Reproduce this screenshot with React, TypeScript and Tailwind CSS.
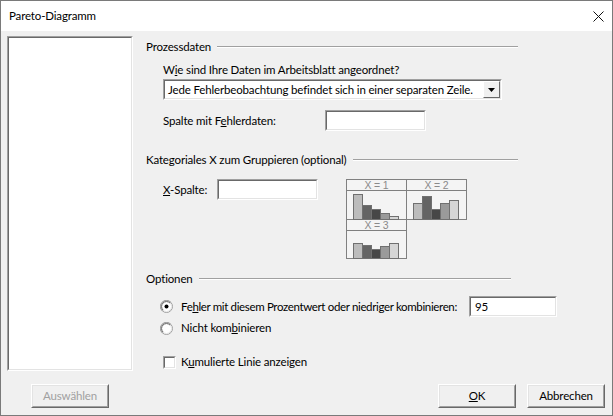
import React from "react";

const font = { fontFamily: 'Lato, "Liberation Sans", sans-serif' };

function Sunken({ className, children }: { className?: string; children?: React.ReactNode }) {
  return (
    <div className={"border border-t-[#a0a0a0] border-l-[#a0a0a0] border-b-white border-r-white " + (className ?? "")}>
      <div className="h-full w-full border border-t-[#696969] border-l-[#696969] border-b-[#e3e3e3] border-r-[#e3e3e3] bg-white flex items-center">
        {children}
      </div>
    </div>
  );
}

function Button({ children, disabled, className }: { children: React.ReactNode; disabled?: boolean; className?: string }) {
  return (
    <div className={"h-[24px] w-[78px] border border-t-white border-l-white border-b-[#696969] border-r-[#696969] " + (className ?? "")}>
      <div className={"h-full w-full border border-t-[#e3e3e3] border-l-[#e3e3e3] border-b-[#a0a0a0] border-r-[#a0a0a0] flex items-center justify-center " + (disabled ? "text-[#a0a0a0]" : "text-black")}>
        {children}
      </div>
    </div>
  );
}

function GroupHeader({ label, lineEnd }: { label: string; lineEnd: number }) {
  return (
    <div className="flex items-center h-[16px]" style={{ width: lineEnd }}>
      <span className="whitespace-nowrap">{label}</span>
      <div className="flex-1 h-px bg-[#a0a0a0] border-b border-white ml-[6px] box-content" />
    </div>
  );
}

function Radio({ checked }: { checked?: boolean }) {
  return (
    <svg width="13" height="13" viewBox="0 0 13 13" className="shrink-0">
      <circle cx="6.5" cy="6.5" r="6" fill="#fff" stroke="#a0a0a0" />
      <circle cx="6.5" cy="6.5" r="5" fill="none" stroke="#e3e3e3" />
      <path d="M2.2 10.8 A6 6 0 0 1 10.8 2.2" fill="none" stroke="#a0a0a0" />
      <path d="M3 10 A4.9 4.9 0 0 1 10 3" fill="none" stroke="#696969" />
      {checked && <circle cx="6.5" cy="6.5" r="2" fill="#000" />}
    </svg>
  );
}

function Chart() {
  const bar = (x: number, top: number, bottom: number, fill: string, key: string) => (
    <rect key={key} x={x} y={top} width={9} height={bottom - top} fill={fill} stroke="#707070" strokeWidth={1} />
  );
  const fills = ["#bcbcbc", "#646464", "#474747", "#9a9a9a", "#d6d6d6"];
  const c1 = [194.5, 205.5, 209.5, 213.5, 216.5];
  const c2 = [203.5, 196.5, 209.5, 203.5, 200.5];
  const c3 = [243.5, 245.5, 249.5, 246.5, 243.5];
  const ox = 346, oy = 179;
  const tf = { fontFamily: '"Liberation Sans", sans-serif' };
  return (
    <svg width="122" height="81" viewBox="0 0 122 81" className="shrink-0">
      <g transform={`translate(${-ox} ${-oy})`}>
        <rect x={346.5} y={179.5} width={120} height={40} fill="#f4f4f4" stroke="#808080" />
        <rect x={346.5} y={219.5} width={60} height={39} fill="#f4f4f4" stroke="#808080" />
        <line x1={406.5} y1={179.5} x2={406.5} y2={219.5} stroke="#808080" />
        <line x1={346.5} y1={190.5} x2={466.5} y2={190.5} stroke="#808080" />
        <line x1={346.5} y1={230.5} x2={406.5} y2={230.5} stroke="#808080" />
        <text x={376.5} y={188.8} fontSize="10.5" textAnchor="middle" fill="#8a8a8a" style={tf} xmlSpace="preserve">X = 1</text>
        <text x={436.5} y={188.8} fontSize="10.5" textAnchor="middle" fill="#8a8a8a" style={tf} xmlSpace="preserve">X = 2</text>
        <text x={376.5} y={228.8} fontSize="10.5" textAnchor="middle" fill="#8a8a8a" style={tf} xmlSpace="preserve">X = 3</text>
        {c1.map((t, i) => bar(353.5 + i * 9, t, 219.5, fills[i], "a" + i))}
        {c2.map((t, i) => bar(413.5 + i * 9, t, 219.5, fills[i], "b" + i))}
        {c3.map((t, i) => bar(353.5 + i * 9, t, 258.5, fills[i], "c" + i))}
      </g>
    </svg>
  );
}

export default function App() {
  return (
    <div className="w-[613px] h-[416px] flex flex-col border border-[#7a7a7a] bg-[#f0f0f0] text-black overflow-hidden text-[11.5px] tracking-[-0.15px]" style={font}>
      {/* Title bar */}
      <div className="h-[30px] bg-white flex items-center justify-between pl-[8px] pr-[8px] shrink-0">
        <span className="text-[11.5px]">Pareto-Diagramm</span>
        <svg width="11" height="11" viewBox="0 0 11 11">
          <path d="M0.5 0.5 L10.5 10.5 M10.5 0.5 L0.5 10.5" stroke="#111" strokeWidth="1" />
        </svg>
      </div>
      <div className="flex flex-1 pt-[5px]">
        {/* Left listbox */}
        <div className="pl-[6px]">
          <Sunken className="w-[126px] h-[335px]" />
        </div>
        {/* Right panel */}
        <div className="flex flex-col pl-[13px] pt-[3px]">
          <GroupHeader label="Prozessdaten" lineEnd={372} />
          <div className="pl-[17px] pt-[7px] flex flex-col">
            <span className="leading-[16px]">W<span className="underline">i</span>e sind Ihre Daten im Arbeitsblatt angeordnet?</span>
            <div className="mt-[1px] flex">
              <Sunken className="w-[339px] h-[21px]">
                <span className="pl-[3px] flex-1 whitespace-nowrap">Jede Fehlerbeobachtung befindet sich in einer separaten Zeile.</span>
                <div className="w-[17px] h-[17px] border border-t-white border-l-white border-b-[#696969] border-r-[#696969] bg-[#f0f0f0] flex items-center justify-center">
                  <svg width="7" height="4" viewBox="0 0 7 4"><path d="M0 0 H7 L3.5 4 Z" fill="#000" /></svg>
                </div>
              </Sunken>
            </div>
            <div className="flex items-center mt-[10px]">
              <span className="w-[162px]">Spalte mit F<span className="underline">e</span>hlerdaten:</span>
              <Sunken className="w-[101px] h-[21px]" />
            </div>
          </div>
          <div className="mt-[21px]">
            <GroupHeader label="Kategoriales X zum Gruppieren (optional)" lineEnd={372} />
          </div>
          <div className="pl-[17px] pt-[11px] flex">
            <div className="flex items-center h-[21px]">
              <span className="w-[54px]"><span className="underline">X</span>-Spalte:</span>
              <Sunken className="w-[101px] h-[21px]" />
            </div>
            <div className="ml-[28px] pt-0">
              <Chart />
            </div>
          </div>
          <div className="mt-[11px]">
            <GroupHeader label="Optionen" lineEnd={365} />
          </div>
          <div className="pl-[14px] pt-[9px] flex flex-col">
            <div className="flex items-center h-[21px]">
              <Radio checked />
              <span className="ml-[8px] w-[288px] whitespace-nowrap tracking-[-0.35px]">Fe<span className="underline">h</span>ler mit diesem Prozentwert oder niedriger kombinieren:</span>
              <Sunken className="w-[88px] h-[21px]">
                <span className="pl-[4px]">95</span>
              </Sunken>
            </div>
            <div className="flex items-center h-[16px] mt-[3px]">
              <Radio />
              <span className="ml-[8px]">Nicht kom<span className="underline">b</span>inieren</span>
            </div>
            <div className="flex items-center h-[16px] mt-[18px] ml-[3px]">
              <div className="w-[13px] h-[13px] border border-t-[#a0a0a0] border-l-[#a0a0a0] border-b-white border-r-white">
                <div className="w-full h-full border border-t-[#696969] border-l-[#696969] border-b-[#e3e3e3] border-r-[#e3e3e3] bg-white" />
              </div>
              <span className="ml-[5px]">K<span className="underline">u</span>mulierte Linie anzeigen</span>
            </div>
          </div>
        </div>
      </div>
      {/* Bottom buttons */}
      <div className="flex items-end h-[38px] pb-[7px] shrink-0">
        <Button disabled className="ml-[30px]">Auswählen</Button>
        <div className="flex-1" />
        <Button><span className="underline">O</span>K</Button>
        <Button className="ml-[11px] mr-[7px]">Abbrechen</Button>
      </div>
    </div>
  );
}
